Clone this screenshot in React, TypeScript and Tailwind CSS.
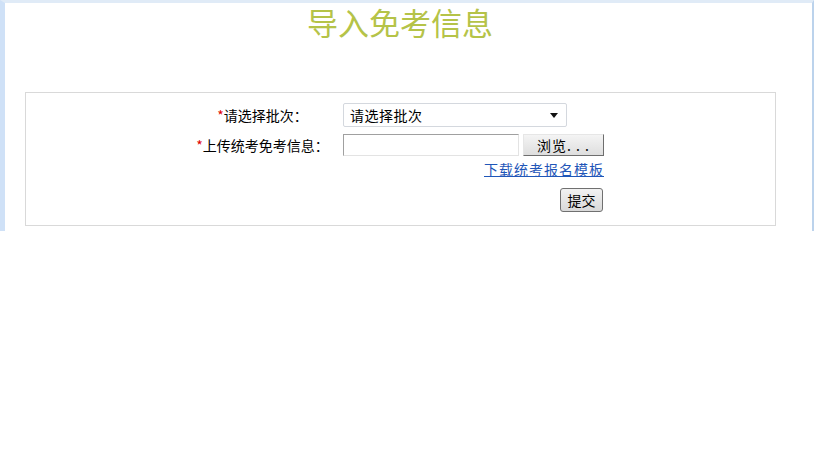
import React from "react";

const font = { fontFamily: '"Noto Sans CJK SC", "Liberation Sans", sans-serif' };

export default function App() {
  return (
    <div className="w-[819px] h-[460px] bg-white text-black" style={font}>
      <div className="w-[814px] h-[231px] border-l-[5px] border-t-[3px] border-r-2 border-l-[#cfe1f7] border-t-[#e0ebf7] border-r-[#bcd3ec] box-border">
        <div className="h-[40px] pt-[1px] pr-[17px] text-center text-[31px] leading-[36px] text-[#b5c348]">导入免考信息</div>
        <div className="ml-[20px] mt-[49px] w-[751px] h-[134px] border border-[#d9d9d9] box-border pt-[10px] text-[14px]">
          <div className="flex items-center h-[24px]">
            <div className="ml-[163px] w-[150px] text-center leading-[20px]">
              <span className="text-[#e00000]">*</span>请选择批次：&nbsp;
            </div>
            <div className="ml-[4px] w-[224px] h-[24px] border border-[#d4d8de] rounded-[2px] box-border flex items-center justify-between pl-[6px] pr-[8px] bg-white">
              <span className="leading-[20px] tracking-[0.5px]">请选择批次</span>
              <svg width="8" height="5" viewBox="0 0 8 5"><path d="M0 0h8L4 5z" fill="#111" /></svg>
            </div>
          </div>
          <div className="flex items-center h-[22px] mt-[7px]">
            <div className="ml-[163px] w-[150px] text-center leading-[20px]">
              <span className="text-[#e00000]">*</span>上传统考免考信息：&nbsp;
            </div>
            <div className="ml-[4px] w-[176px] h-[22px] border border-t-[#a0a0a0] border-l-[#a0a0a0] border-r-[#e3e3e3] border-b-[#e3e3e3] box-border bg-white" />
            <div className="ml-[4px] w-[81px] h-[22px] box-border border border-t-[#e6e6e6] border-l-[#e6e6e6] border-r-[#6e6e6e] border-b-[#6e6e6e] bg-gradient-to-b from-[#f4f4f4] to-[#dedede] flex items-center justify-center leading-[20px] tracking-[1px]">
              浏览. . .
            </div>
          </div>
          <div className="flex h-[18px] mt-[4px]">
            <div className="ml-[316px] w-[261px] flex justify-end">
              <span className="text-[#1f56b8] underline leading-[18px] tracking-[1px] -mr-[1px]">下载统考报名模板</span>
            </div>
          </div>
          <div className="flex mt-[10px]">
            <div className="ml-[316px] w-[261px] flex justify-end">
              <div className="w-[43px] h-[24px] box-border border border-[#707070] rounded-[3px] bg-gradient-to-b from-[#f2f2f2] to-[#d9d9d9] flex items-center justify-center leading-[20px]">
                提交
              </div>
            </div>
          </div>
        </div>
      </div>
    </div>
  );
}
